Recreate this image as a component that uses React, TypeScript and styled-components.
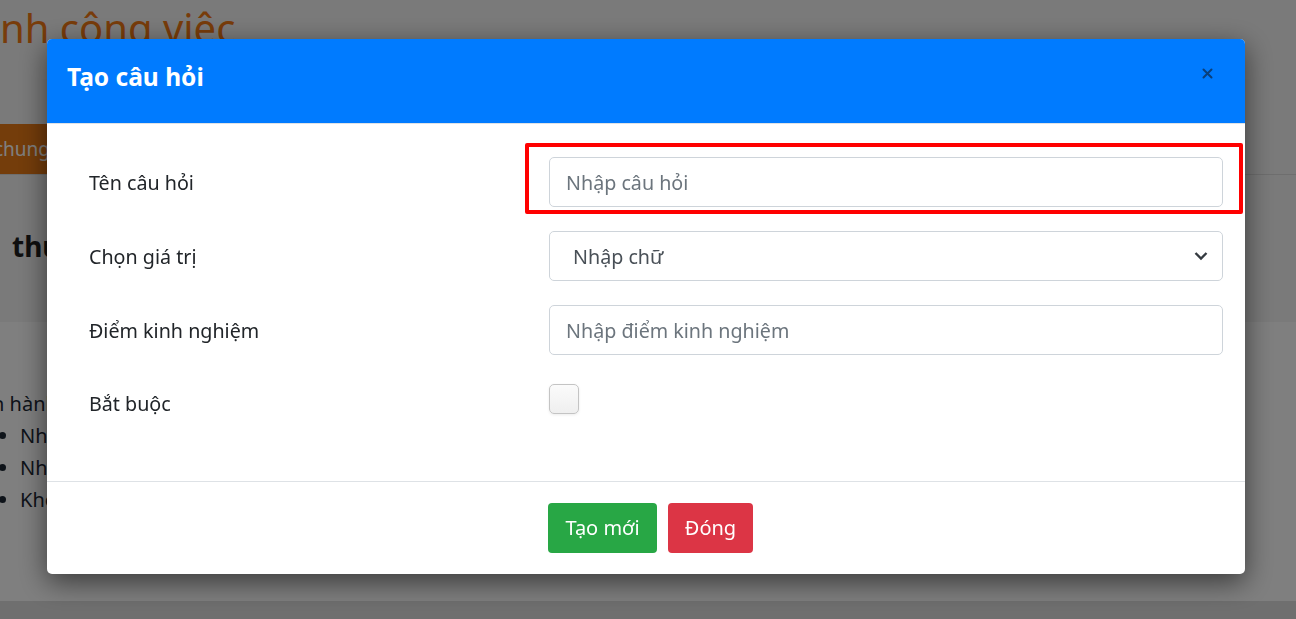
import React from "react";
import styled, { createGlobalStyle } from "styled-components";

const Global = createGlobalStyle`
  html, body { margin: 0; padding: 0; }
  body {
    font-family: "Noto Sans", "Open Sans", sans-serif;
    background: #ffffff;
    color: #212529;
    overflow: hidden;
  }
  * { box-sizing: border-box; }
`;

const Page = styled.div`
  width: 1296px;
  height: 619px;
  display: flex;
  flex-direction: column;
  overflow: hidden;
`;

const PageTop = styled.div`
  background: #f4f4f4;
  height: 322px;
  display: flex;
  flex-direction: column;
`;

const PageTitle = styled.h1`
  margin: 0;
  padding: 2px 0 0 0;
  height: 124px;
  font-size: 40px;
  font-weight: 400;
  color: #f07814;
  line-height: 52px;
  white-space: nowrap;
`;

const TabBar = styled.div`
  height: 51px;
  border-bottom: 1px solid #dcdcdc;
  display: flex;
`;

const Tab = styled.div`
  background: #e97a16;
  color: #ffffff;
  font-size: 19px;
  line-height: 50px;
  padding: 0 14px 0 0;
  margin-left: -6px;
`;

const SectionTitle = styled.h2`
  margin: 0;
  padding: 52px 0 0 12px;
  font-size: 28px;
  font-weight: 700;
  color: #1e1e1e;
`;

const PageBody = styled.div`
  flex: 1;
  padding: 66px 0 0 0;
  font-size: 20px;
  color: #1c2733;
`;

const Para = styled.div`
  line-height: 32px;
  margin-left: -8px;
`;

const List = styled.ul`
  margin: 0;
  padding-left: 20px;
  line-height: 32px;
`;

const PageFooter = styled.div`
  height: 18px;
  background: #dedede;
`;

const Overlay = styled.div`
  position: fixed;
  inset: 0;
  background: rgba(0, 0, 0, 0.5);
  display: flex;
  align-items: flex-start;
  padding: 39px 0 0 47px;
`;

const Modal = styled.div`
  width: 1198px;
  background: #ffffff;
  border-radius: 5px;
  box-shadow: 0 8px 28px rgba(0, 0, 0, 0.55);
  display: flex;
  flex-direction: column;
`;

const Header = styled.div`
  height: 85px;
  background: #007bff;
  border-radius: 5px 5px 0 0;
  display: flex;
  align-items: center;
  justify-content: space-between;
  padding: 0 31px 0 20px;
  border-bottom: 1px solid #dee2e6;
`;

const Title = styled.h5`
  margin: 0 0 9px 0;
  font-size: 24.5px;
  font-weight: 700;
  color: #ffffff;
`;

const CloseButton = styled.button`
  border: none;
  background: transparent;
  padding: 0;
  width: 14px;
  height: 14px;
  display: flex;
  align-items: center;
  justify-content: center;
  margin-bottom: 16px;
  cursor: pointer;
`;

const Body = styled.div`
  padding: 33px 22px 52px 42px;
  display: flex;
  flex-direction: column;
  gap: 24px;
`;

const FieldRow = styled.div<{ $align?: string }>`
  display: grid;
  grid-template-columns: 460px 1fr;
  align-items: ${(p) => p.$align || "center"};
  min-height: 50px;
`;

const Label = styled.label<{ $offset?: number }>`
  font-size: 19.7px;
  color: #212529;
  margin-top: ${(p) => p.$offset || 0}px;
`;

const FieldWrap = styled.div`
  position: relative;
`;

const Input = styled.input`
  width: 100%;
  height: 50px;
  border: 1px solid #ced4da;
  border-radius: 5px;
  padding: 0 16px;
  font-family: inherit;
  font-size: 19.7px;
  color: #495057;
  background: #fff;
  outline: none;
  &::placeholder { color: #6c757d; }
`;

const SelectBox = styled.div`
  height: 50px;
  border: 1px solid #ced4da;
  border-radius: 5px;
  padding: 0 14px 0 23px;
  display: flex;
  align-items: center;
  justify-content: space-between;
  font-size: 19.7px;
  color: #495057;
`;

const Highlight = styled.div`
  position: absolute;
  top: -14px;
  left: -24px;
  right: -20px;
  bottom: -7px;
  border: 4px solid #ff0000;
  border-radius: 2px;
  pointer-events: none;
`;

const Checkbox = styled.span`
  display: block;
  width: 30px;
  height: 30px;
  border: 1px solid #c4c4c4;
  border-radius: 5px;
  background: linear-gradient(#fbfbfb, #efefef);
  box-shadow: 0 1px 3px rgba(0, 0, 0, 0.08);
  margin-top: 5px;
`;

const Footer = styled.div`
  border-top: 1px solid #dee2e6;
  height: 93px;
  display: flex;
  align-items: center;
  justify-content: center;
  gap: 11px;
  padding: 0 0 1px 9px;
`;

const Button = styled.button<{ $bg: string; $w: number }>`
  width: ${(p) => p.$w}px;
  height: 50px;
  border: none;
  border-radius: 4px;
  background: ${(p) => p.$bg};
  color: #ffffff;
  font-family: inherit;
  font-size: 20px;
`;

export default function App() {
  return (
    <>
      <Global />
      <Page>
        <PageTop>
          <PageTitle>nh công việc</PageTitle>
          <TabBar>
            <Tab>chung</Tab>
          </TabBar>
          <SectionTitle>thu</SectionTitle>
        </PageTop>
        <PageBody>
          <Para>h hành</Para>
          <List>
            <li>Nhập</li>
            <li>Nhập</li>
            <li>Khóa</li>
          </List>
        </PageBody>
        <PageFooter />
      </Page>
      <Overlay>
        <Modal>
          <Header>
            <Title>Tạo câu hỏi</Title>
            <CloseButton aria-label="Close">
              <svg width="11" height="11" viewBox="0 0 11 11">
                <path d="M1.5 1.5 L9.5 9.5 M9.5 1.5 L1.5 9.5" stroke="#0a3f7a" strokeWidth="2" strokeLinecap="round" />
              </svg>
            </CloseButton>
          </Header>
          <Body>
            <FieldRow>
              <Label>Tên câu hỏi</Label>
              <FieldWrap>
                <Input placeholder="Nhập câu hỏi" />
                <Highlight />
              </FieldWrap>
            </FieldRow>
            <FieldRow>
              <Label>Chọn giá trị</Label>
              <SelectBox>
                <span>Nhập chữ</span>
                <svg width="14" height="10" viewBox="0 0 14 10">
                  <path d="M1.5 2 L7 7.5 L12.5 2" stroke="#343a40" strokeWidth="2.4" fill="none" />
                </svg>
              </SelectBox>
            </FieldRow>
            <FieldRow>
              <Label>Điểm kinh nghiệm</Label>
              <Input placeholder="Nhập điểm kinh nghiệm" />
            </FieldRow>
            <FieldRow $align="start">
              <Label $offset={11}>Bắt buộc</Label>
              <Checkbox />
            </FieldRow>
          </Body>
          <Footer>
            <Button $bg="#28a745" $w={109}>Tạo mới</Button>
            <Button $bg="#dc3545" $w={85}>Đóng</Button>
          </Footer>
        </Modal>
      </Overlay>
    </>
  );
}
